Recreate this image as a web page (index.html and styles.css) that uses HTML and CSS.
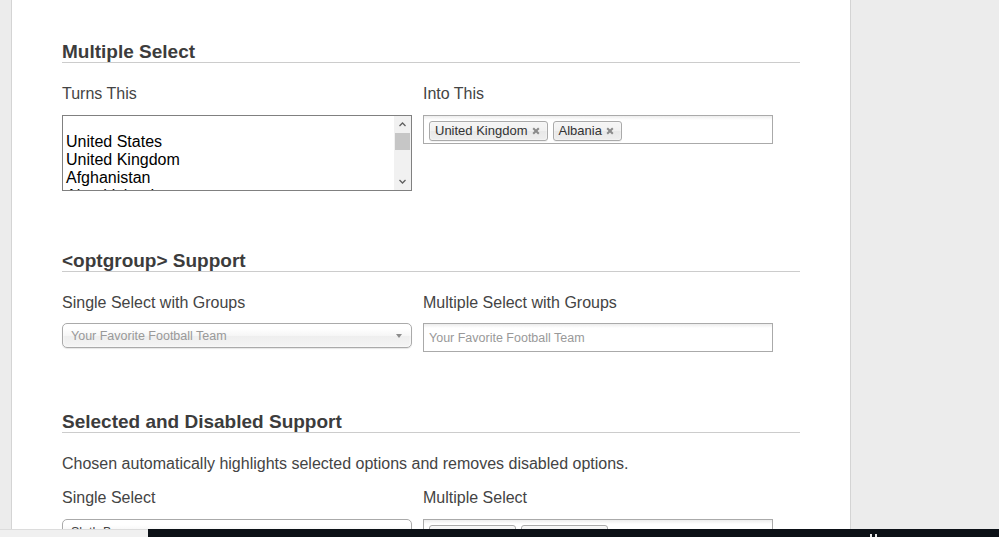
FILE: index.html
```html
<!DOCTYPE html>
<html lang="en">
<head>
<meta charset="utf-8">
<title>Chosen</title>
<link rel="stylesheet" href="styles.css">
</head>
<body>
<div class="page">
  <section class="section first">
    <h2>Multiple Select</h2>
    <div class="cols">
      <div class="field">
        <div class="label">Turns This</div>
        <div class="listbox">
          <div class="options">
            <div class="opt blank"></div>
            <div class="opt">United States</div>
            <div class="opt">United Kingdom</div>
            <div class="opt">Afghanistan</div>
            <div class="opt">Aland Islands</div>
          </div>
          <div class="scrollbar">
            <div class="sb-btn"><svg width="17" height="17" viewBox="0 0 17 17"><path d="M5.5 10 L8.5 7 L11.5 10" fill="none" stroke="#606060" stroke-width="1.3"/></svg></div>
            <div class="sb-track"><div class="sb-thumb"></div></div>
            <div class="sb-btn"><svg width="17" height="17" viewBox="0 0 17 17"><path d="M5.5 7 L8.5 10 L11.5 7" fill="none" stroke="#606060" stroke-width="1.3"/></svg></div>
          </div>
        </div>
      </div>
      <div class="field">
        <div class="label">Into This</div>
        <div class="chosen-multi">
          <span class="choice">United Kingdom<svg class="x" width="8" height="8" viewBox="0 0 8 8"><path d="M1.2 1.2 L6.8 6.8 M6.8 1.2 L1.2 6.8" stroke="#8a8a8a" stroke-width="2"/></svg></span>
          <span class="choice">Albania<svg class="x" width="8" height="8" viewBox="0 0 8 8"><path d="M1.2 1.2 L6.8 6.8 M6.8 1.2 L1.2 6.8" stroke="#8a8a8a" stroke-width="2"/></svg></span>
        </div>
      </div>
    </div>
  </section>

  <section class="section">
    <h2>&lt;optgroup&gt; Support</h2>
    <div class="cols tight">
      <div class="field">
        <div class="label">Single Select with Groups</div>
        <div class="chosen-single shifted"><span class="placeholder">Your Favorite Football Team</span><span class="arrow"></span></div>
      </div>
      <div class="field">
        <div class="label">Multiple Select with Groups</div>
        <div class="chosen-multi"><span class="placeholder">Your Favorite Football Team</span></div>
      </div>
    </div>
  </section>

  <section class="section">
    <h2>Selected and Disabled Support</h2>
    <p class="desc">Chosen automatically highlights selected options and removes disabled options.</p>
    <div class="cols after-desc">
      <div class="field">
        <div class="label">Single Select</div>
        <div class="chosen-single"><span class="value">Sloth Bear</span><span class="arrow"></span></div>
      </div>
      <div class="field">
        <div class="label">Multiple Select</div>
        <div class="chosen-multi">
          <span class="choice">Sloth Bear<svg class="x" width="8" height="8" viewBox="0 0 8 8"><path d="M1.2 1.2 L6.8 6.8 M6.8 1.2 L1.2 6.8" stroke="#8a8a8a" stroke-width="2"/></svg></span>
          <span class="choice">Polar Bear<svg class="x" width="8" height="8" viewBox="0 0 8 8"><path d="M1.2 1.2 L6.8 6.8 M6.8 1.2 L1.2 6.8" stroke="#8a8a8a" stroke-width="2"/></svg></span>
        </div>
      </div>
    </div>
  </section>
</div>

<div class="bottom-bar">
  <div class="bar-light"></div>
  <div class="bar-dark"><span class="mark"></span><span class="mark"></span></div>
</div>
</body>
</html>
```

FILE: styles.css
```css
html, body {
  margin: 0;
  padding: 0;
  height: 100%;
  overflow: hidden;
}

body {
  background: #ececec;
  font-family: "Liberation Sans", Arial, sans-serif;
  color: #444;
}

.page {
  margin-left: 11px;
  width: 738px;
  min-height: 100%;
  padding: 40px 50px 0 50px;
  background: #fff;
  border-left: 1px solid #d4d4d4;
  border-right: 1px solid #d4d4d4;
}

.section h2 {
  margin: 58px 0 0 0;
  padding-top: 2px;
  font-size: 19px;
  line-height: 20px;
  font-weight: bold;
  color: #3c3c3c;
  border-bottom: 1px solid #cccccc;
}

.section.first h2 {
  margin-top: 0;
}

.cols {
  display: grid;
  grid-template-columns: 361px 361px;
  margin-top: 20px;
}

.cols.after-desc {
  margin-top: 14px;
}

.label {
  font-size: 16px;
  line-height: 20px;
  padding-top: 1px;
  margin-bottom: 11px;
  color: #444;
}

.cols.tight .label {
  margin-bottom: 10px;
}

.desc {
  margin: 20px 0 0 0;
  padding-top: 1px;
  font-size: 16px;
  line-height: 19px;
  color: #444;
}

/* native-like listbox */
.listbox {
  box-sizing: border-box;
  width: 350px;
  height: 76px;
  border: 1px solid #808080;
  display: flex;
  background: #fff;
}

.options {
  flex: 1;
  overflow: hidden;
  padding-left: 3px;
  font-size: 16px;
  line-height: 18px;
  color: #000;
}

.opt {
  white-space: nowrap;
}

.opt.blank {
  height: 17px;
}

.scrollbar {
  width: 17px;
  background: #f1f1f1;
  display: flex;
  flex-direction: column;
}

.sb-btn {
  height: 17px;
  display: flex;
}

.sb-track {
  flex: 1;
  padding: 0 1px;
}

.sb-thumb {
  height: 17px;
  background: #c6c6c6;
}

/* chosen multi */
.chosen-multi {
  box-sizing: border-box;
  width: 350px;
  height: 29px;
  border: 1px solid #aaaaaa;
  background: linear-gradient(#eeeeee 1%, #ffffff 15%);
  padding: 0 0 0 5px;
  display: flex;
  align-items: flex-start;
  font-size: 13px;
}

.chosen-multi .placeholder {
  align-self: center;
  font-size: 12.5px;
  color: #999;
}

.choice {
  display: inline-flex;
  align-items: center;
  margin: 5px 5px 0 0;
  padding: 2px 7px 3px 5px;
  line-height: 13px;
  border: 1px solid #aaaaaa;
  border-radius: 3px;
  color: #333;
  background: linear-gradient(#f4f4f4 20%, #f0f0f0 50%, #e8e8e8 52%, #eeeeee 100%);
  box-shadow: 0 0 2px #fff inset, 0 1px 0 rgba(0, 0, 0, 0.05);
}

.choice .x {
  margin-left: 4px;
}

/* chosen single */
.chosen-single {
  box-sizing: border-box;
  width: 350px;
  height: 25px;
  border: 1px solid #aaaaaa;
  border-radius: 5px;
  padding: 1px 9px 0 8px;
  display: flex;
  align-items: center;
  justify-content: space-between;
  font-size: 12.5px;
  background: linear-gradient(#ffffff 20%, #f6f6f6 50%, #eeeeee 52%, #f4f4f4 100%);
  box-shadow: 0 0 3px #fff inset, 0 1px 1px rgba(0, 0, 0, 0.1);
}

.chosen-single.shifted {
  margin-top: 1px;
}

.chosen-single .placeholder {
  color: #999;
}

.chosen-single .value {
  color: #444;
}

.arrow {
  width: 0;
  height: 0;
  border-left: 3px solid transparent;
  border-right: 3px solid transparent;
  border-top: 4px solid #8c8c8c;
}

/* bottom overlay bar */
.bottom-bar {
  position: fixed;
  left: 0;
  right: 0;
  bottom: 0;
  height: 8px;
  display: flex;
}

.bar-light {
  width: 148px;
  background: #f0f0f0;
  border-top: 1px solid #dcdcdc;
}

.bar-dark {
  flex: 1;
  background: #0c1117;
  display: flex;
  align-items: flex-end;
  padding-left: 722px;
  gap: 3px;
}

.mark {
  width: 2px;
  height: 3px;
  background: #e8e8e8;
}
```
